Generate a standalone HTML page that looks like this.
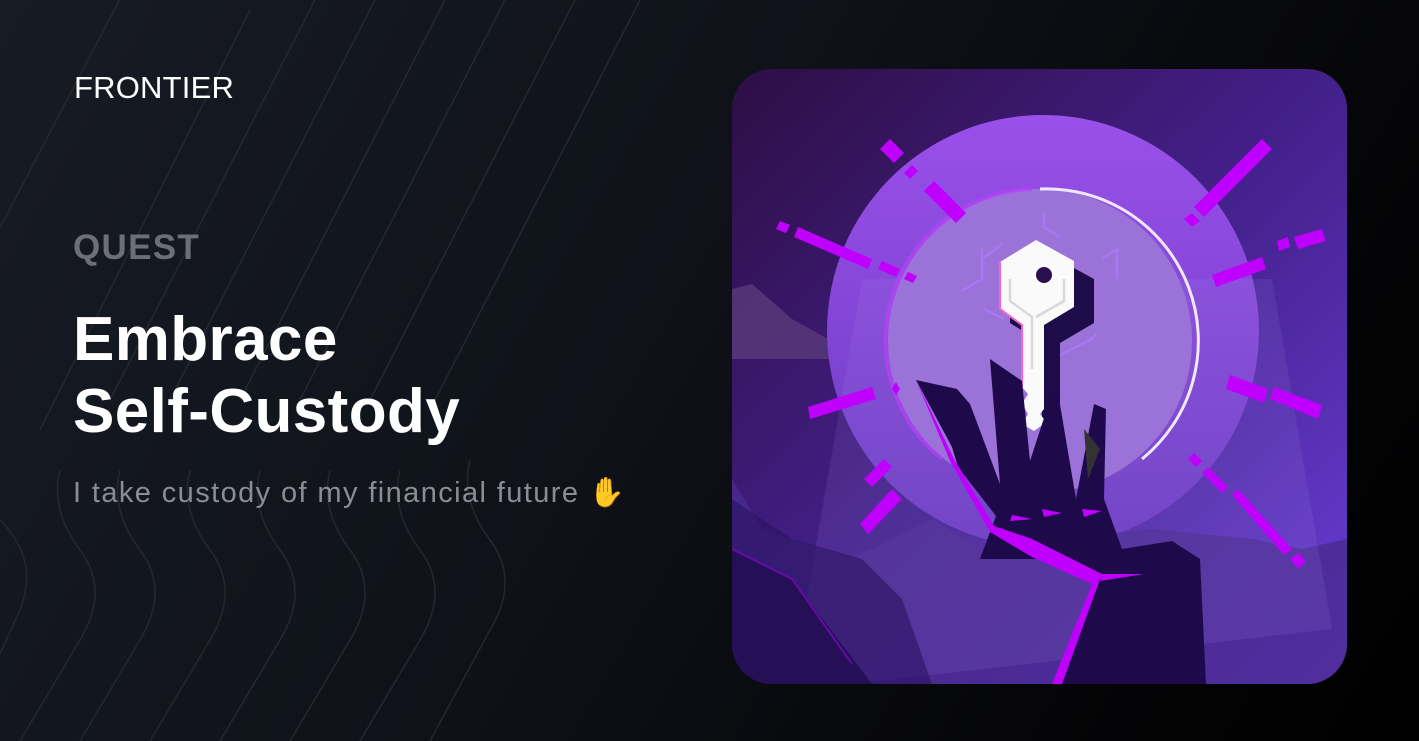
<!DOCTYPE html>
<html><head><meta charset="utf-8"><style>
html,body{margin:0;padding:0}
body{width:1419px;height:741px;overflow:hidden;position:relative;background:linear-gradient(120deg,#171b24 0%,#0f1219 45%,#050507 80%,#000 100%);font-family:"Liberation Sans",sans-serif}
.t{position:absolute;left:73px;white-space:nowrap}
</style></head><body>
<svg width="700" height="741" style="position:absolute;left:0;top:0" fill="none" stroke="#25282f" stroke-width="1.5">
<path d="M-80 380 L130 -20"/>
<path d="M0 520 Q40 560 20 610 L-40 741"/>
<path d="M40 430 L250 10 M60 470 Q50 510 80 550 Q110 590 80 640 L20 741"/>
<path d="M110 400 L320 -10 M120 470 Q110 510 140 550 Q170 590 140 640 L80 741"/>
<path d="M170 400 L380 -10 M190 470 Q180 510 210 550 Q240 590 210 640 L150 741"/>
<path d="M240 400 L450 -10 M260 470 Q250 510 280 550 Q310 590 280 640 L220 741"/>
<path d="M300 400 L510 -10 M330 470 Q320 510 350 550 Q380 590 350 640 L290 741"/>
<path d="M370 400 L580 -10 M400 470 Q390 510 420 550 Q450 590 420 640 L360 741"/>
<path d="M430 410 L640 0 M470 460 Q460 500 490 540 Q520 580 490 630 L430 741"/>
</svg>
<div class="t" style="left:74px;top:70px;font-size:31px;color:#fff;letter-spacing:0.2px;font-weight:300">FRONTIER</div>
<div class="t" style="top:228px;font-size:35px;font-weight:bold;color:#6c6f77;letter-spacing:1.3px">QUEST</div>
<div class="t" style="top:304px;font-size:62px;font-weight:bold;color:#fff;line-height:72px;letter-spacing:0.4px">Embrace<br>Self-Custody</div>
<div class="t" style="top:476px;font-size:29px;color:#8a8d94;letter-spacing:1.4px">I take custody of my financial future <span style="color:#a0762c">✋</span></div>

<svg width="615" height="615" viewBox="0 0 615 615" style="position:absolute;left:732px;top:69px;border-radius:40px">
<defs>
<linearGradient id="bg" x1="0" y1="0" x2="1" y2="1"><stop offset="0" stop-color="#2e0e44"/><stop offset="0.5" stop-color="#43208a"/><stop offset="1" stop-color="#6a3ed8"/></linearGradient>
<linearGradient id="c1" x1="0" y1="0" x2="0" y2="1"><stop offset="0" stop-color="#9a50ea"/><stop offset="1" stop-color="#6a3bc0"/></linearGradient>
</defs>
<rect width="615" height="615" fill="url(#bg)"/>
<path d="M0 220 L20 215 L60 250 L105 275 L105 290 L0 290Z" fill="#5a3a7a" opacity=".8"/>
<circle cx="311" cy="262" r="216" fill="url(#c1)"/>
<path d="M0 410 L30 460 L120 490 L200 450 L250 480 L320 470 L420 460 L520 470 L570 480 L615 470 L615 615 L0 615Z" fill="#4a2a90" opacity=".8"/>
<path d="M130 210 L540 210 L600 560 L120 615 L60 615 Z" fill="#b090f0" opacity=".12"/>
<circle cx="308" cy="272" r="152" fill="#9a72d8"/>
<path d="M308 120 A152 152 0 0 1 410 390" stroke="#f0e8ff" stroke-width="3" fill="none"/>
<path d="M300 120 A152 152 0 0 0 210 390" stroke="#c040ff" stroke-width="4" fill="none" opacity=".6"/>
<path d="M0 480 L60 510 L140 615 L0 615Z" fill="#1e0c48"/>
<path d="M0 480 L60 510 L120 595" stroke="#c000ff" stroke-width="2" fill="none"/>
<path d="M0 615 L0 430 L60 470 L130 490 L170 530 L200 615Z" fill="#2a1260" opacity=".6"/>
<g fill="#c000ff">
<path d="M148 80 L158 70 L172 84 L162 94Z"/><path d="M172 104 L180 96 L186 102 L178 110Z"/><path d="M192 122 L202 112 L234 144 L224 154Z"/>
<path d="M44 160 L48 152 L58 156 L54 164Z"/><path d="M62 168 L66 158 L140 190 L136 200Z"/><path d="M146 200 L150 192 L168 200 L164 208Z"/><path d="M172 210 L176 203 L185 207 L181 214Z"/>
<path d="M78 350 L76 338 L140 318 L144 330Z"/><path d="M160 320 L164 313 L168 320 L164 326Z"/>
<path d="M132 410 L152 390 L160 398 L140 418Z"/><path d="M128 455 L160 420 L170 430 L136 465Z"/>
<path d="M462 138 L530 70 L540 80 L472 148Z"/><path d="M452 150 L460 144 L468 152 L460 158Z"/>
<path d="M484 218 L480 206 L530 188 L534 200Z"/><path d="M547 182 L545 172 L556 168 L558 178Z"/><path d="M566 180 L562 168 L590 160 L594 172Z"/>
<path d="M494 320 L498 306 L536 320 L532 334Z"/><path d="M538 330 L542 318 L590 336 L586 350Z"/>
<path d="M456 390 L462 384 L470 392 L464 398Z"/><path d="M470 404 L476 398 L496 418 L490 424Z"/><path d="M500 426 L506 420 L560 480 L552 486Z"/><path d="M558 490 L566 484 L574 492 L566 500Z"/>
</g>
<g stroke="#a878f0" stroke-width="2.5" fill="none">
<path d="M250 180 L250 210 L230 222"/><path d="M270 175 L250 190"/><path d="M312 143 L312 158 L328 168"/><path d="M252 240 L272 250"/><path d="M370 190 L385 180 L385 210"/><path d="M364 265 L360 270 L320 290 L320 305"/><path d="M346 210 L346 240"/>
</g>
<path d="M310 183 L352 206 L352 250 L318 270 L318 375 L300 390 L300 270 L268 250 L268 206Z" fill="#1e0c48" transform="translate(10,4)"/>
<path d="M304 171 L342 192 L342 238 L312 256 L312 340 L308 345 L312 350 L312 355 L302 362 L290 355 L296 345 L290 335 L296 325 L290 318 L290 256 L268 240 L268 193Z" fill="#fafafa"/>
<path d="M268 193 L268 240 L290 256 L290 318" stroke="#ff60c8" stroke-width="2" fill="none"/>
<path d="M278 210 L278 232 L300 248 L300 300 M332 210 L332 232 L304 248" stroke="#d8d8d8" stroke-width="2.5" fill="none"/>
<circle cx="312" cy="206" r="8" fill="#2a1050"/>
<path d="M184 311 L225 320 L238 335 L268 415 L258 290 L290 312 L298 392 L324 312 L344 430 L362 335 L374 340 L372 430 L390 480 L440 472 L468 490 L474 615 L328 615 L370 505 L306 490 L248 490 L264 447 L226 398 L220 378Z" fill="#1e0a4a"/>
<path d="M352 360 L368 380 L356 410Z" fill="#333"/>
<path d="M184 311 L222 390 L262 457 L300 470 L370 505 L330 615 L320 615 L360 515 L300 488 L258 463 L218 392Z" fill="#c000ff"/>
<path d="M370 505 L412 505 L368 512Z" fill="#c000ff"/>
<path d="M280 446 L300 450 L278 452Z M310 440 L330 444 L312 448Z M350 440 L370 442 L352 448Z" fill="#c000ff"/>
</svg>
</body></html>
